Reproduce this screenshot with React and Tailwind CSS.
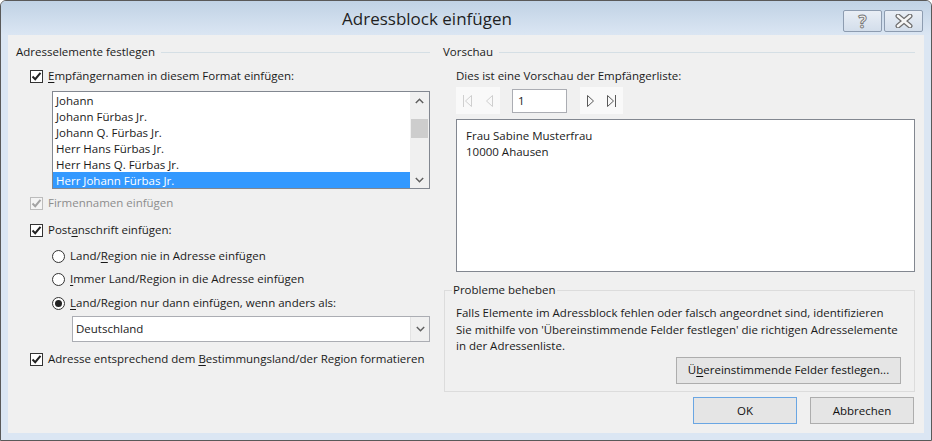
import React from 'react';

const font = { fontFamily: '"Open Sans", "Noto Sans", sans-serif' };

function CheckBox({ checked = true, disabled = false }) {
  const stroke = disabled ? '#a3a3a3' : '#222';
  return (
    <span className={`w-[13px] h-[13px] shrink-0 border flex items-center justify-center ${disabled ? 'border-[#bcbcbc] bg-[#f4f4f4]' : 'border-[#333] bg-white'}`}>
      {checked && (
        <svg width="11" height="11" viewBox="0 0 11 11">
          <path d="M1.5 5.5 L4.2 8.2 L9.5 1.8" fill="none" stroke={stroke} strokeWidth="2" />
        </svg>
      )}
    </span>
  );
}

function Radio({ checked = false }) {
  return (
    <span className="w-[13px] h-[13px] shrink-0 rounded-full border border-[#333] bg-white flex items-center justify-center">
      {checked && <span className="w-[7px] h-[7px] rounded-full bg-[#222]" />}
    </span>
  );
}

function Chevron({ up = false }) {
  return (
    <svg width="9" height="6" viewBox="0 0 9 6">
      <path d={up ? 'M0.8 5 L4.5 1.3 L8.2 5' : 'M0.8 1 L4.5 4.7 L8.2 1'} fill="none" stroke="#606060" strokeWidth="1.5" />
    </svg>
  );
}

function NavIcon({ dir, bar, color }) {
  const tri = dir === 'left' ? 'M8.5 0.5 L8.5 11.5 L2.5 6 Z' : 'M1.5 0.5 L1.5 11.5 L7.5 6 Z';
  return (
    <svg width="10" height="12" viewBox="0 0 10 12">
      <path d={tri} fill="none" stroke={color} strokeWidth="1" />
      {bar && <path d={dir === 'left' ? 'M0.5 0 L0.5 12' : 'M9.5 0 L9.5 12'} stroke={color} strokeWidth="1" />}
    </svg>
  );
}

function U({ children }) {
  return <span className="underline underline-offset-2">{children}</span>;
}

function GroupHeader({ title }) {
  return (
    <div className="flex items-center h-4">
      <span className="leading-4">{title}</span>
      <span className="flex-1 h-px bg-[#d5dfe5] ml-[6px] mt-px" />
    </div>
  );
}

function Btn({ children, className = '' }) {
  return (
    <button className={`h-[27px] border bg-[#e5e5e5] text-[11.5px] text-[#111] flex items-center justify-center whitespace-nowrap ${className}`}>
      {children}
    </button>
  );
}

const names = [
  'Johann',
  'Johann Fürbas Jr.',
  'Johann Q. Fürbas Jr.',
  'Herr Hans Fürbas Jr.',
  'Herr Hans Q. Fürbas Jr.',
  'Herr Johann Fürbas Jr.',
];

export default function App() {
  return (
    <div style={font} className="w-[932px] h-[441px] bg-[#dbe6f3] border border-[#595959] rounded-t-[6px] flex flex-col text-[11.5px] text-[#1a1a1a] overflow-hidden whitespace-nowrap">
      {/* title bar */}
      <div className="h-[34px] flex bg-gradient-to-b from-[#c0d2e5] to-[#dbe6f3]">
        <div className="flex-1 flex items-center justify-center pt-px">
          <span className="text-[17px] text-[#1f1f1f] ml-[10px]">Adressblock einfügen</span>
        </div>
        <div className="flex gap-[2px] pt-[9px] pr-[8px]">
          <div className="w-[39px] h-[22px] border border-[#8d9cb0] rounded-[2px] bg-gradient-to-b from-[#e9eef5] to-[#d3deeb] flex items-center justify-center">
            <span className="text-[17px] font-bold leading-none text-[#f4f4f4] [-webkit-text-stroke:1px_#7b7b7b]">?</span>
          </div>
          <div className="w-[39px] h-[22px] border border-[#8d9cb0] rounded-[2px] bg-gradient-to-b from-[#e9eef5] to-[#d3deeb] flex items-center justify-center">
            <svg width="18" height="14" viewBox="0 0 18 14">
              <path d="M3 2 L15 12 M15 2 L3 12" stroke="#6f6f6f" strokeWidth="5" strokeLinecap="round" />
              <path d="M3 2 L15 12 M15 2 L3 12" stroke="#f6f6f6" strokeWidth="2.6" strokeLinecap="round" />
            </svg>
          </div>
        </div>
      </div>

      {/* content */}
      <div className="mx-[7px] h-[398px] bg-[#f0f0f0] flex">
        {/* left column */}
        <div className="w-[430px] pl-2 pr-2 pt-[9px] flex flex-col">
          <GroupHeader title="Adresselemente festlegen" />

          <div className="flex items-center h-4 mt-2 ml-[14px] gap-[5px]">
            <CheckBox />
            <span><U>E</U>mpfängernamen in diesem Format einfügen:</span>
          </div>

          <div className="ml-[36px] mt-[7px] h-[98px] border border-[#828790] bg-white flex">
            <div className="flex-1 flex flex-col">
              {names.map((n, i) => (
                <div key={n} className={`h-4 leading-4 pl-[3px] pt-px ${i === 5 ? 'bg-[#3399ff] text-white' : ''}`}>{n}</div>
              ))}
            </div>
            <div className="w-[19px] bg-[#f0f0f0] flex flex-col items-center">
              <div className="h-[17px] flex items-center justify-center"><Chevron up /></div>
              <div className="w-[17px] h-[19px] bg-[#cdcdcd] mt-[10px]" />
              <div className="flex-1" />
              <div className="h-[17px] flex items-center justify-center"><Chevron /></div>
            </div>
          </div>

          <div className="flex items-center h-4 mt-[6px] ml-[14px] gap-[5px] text-[#8d8d8d]">
            <CheckBox disabled />
            <span>Firmennamen einfügen</span>
          </div>

          <div className="flex items-center h-4 mt-[11px] ml-[14px] gap-[5px]">
            <CheckBox />
            <span>Post<U>a</U>nschrift einfügen:</span>
          </div>

          <div className="flex items-center h-4 mt-[10px] ml-[36px] gap-[5px]">
            <Radio />
            <span>Land/<U>R</U>egion nie in Adresse einfügen</span>
          </div>
          <div className="flex items-center h-4 mt-[7px] ml-[36px] gap-[5px]">
            <Radio />
            <span><U>I</U>mmer Land/Region in die Adresse einfügen</span>
          </div>
          <div className="flex items-center h-4 mt-[8px] ml-[36px] gap-[5px]">
            <Radio checked />
            <span><U>L</U>and/Region nur dann einfügen, wenn anders als:</span>
          </div>

          <div className="ml-[56px] mt-[5px] h-[26px] border border-[#abadb3] bg-white flex">
            <div className="flex-1 flex items-center pl-[3px]">Deutschland</div>
            <div className="w-[19px] bg-[#f0f0f0] border-l border-[#e3e3e3] flex items-center justify-center">
              <Chevron />
            </div>
          </div>

          <div className="flex items-center h-4 mt-[9px] ml-[14px] gap-[5px]">
            <CheckBox />
            <span>Adresse entsprechend dem <U>B</U>estimmungsland/der Region formatieren</span>
          </div>
        </div>

        {/* right column */}
        <div className="flex-1 pl-[5px] pr-[9px] pt-[9px] flex flex-col">
          <GroupHeader title="Vorschau" />

          <div className="ml-[13px] flex flex-col">
            <div className="h-4 leading-4 mt-2">Dies ist eine Vorschau der Empfängerliste:</div>

            <div className="flex items-center h-[27px] mt-[3px]">
              <div className="w-[44px] h-[27px] bg-[#f9f9f9] flex items-center pl-[7px] gap-[11px]">
                <NavIcon dir="left" bar color="#cfcfcf" />
                <NavIcon dir="left" color="#cfcfcf" />
              </div>
              <div className="ml-[12px] w-[55px] h-[24px] border border-[#abadb3] bg-white flex items-center pl-[5px]">1</div>
              <div className="ml-[13px] w-[43px] h-[27px] bg-[#f9f9f9] flex items-center pl-[6px] gap-[10px]">
                <NavIcon dir="right" color="#5a5a5a" />
                <NavIcon dir="right" bar color="#5a5a5a" />
              </div>
            </div>

            <div className="mt-[5px] h-[153px] border border-[#828790] bg-white pl-[9px] pt-[8px] leading-4">
              <div>Frau Sabine Musterfrau</div>
              <div>10000 Ahausen</div>
            </div>
          </div>

          <fieldset className="mt-[10px] ml-px h-[110px] border border-[#dcdcdc] px-[11px]">
            <legend className="ml-[-4px] px-px leading-4">Probleme beheben</legend>
            <div className="leading-[16.5px] mt-[7px]">
              <div>Falls Elemente im Adressblock fehlen oder falsch angeordnet sind, identifizieren</div>
              <div>Sie mithilfe von 'Übereinstimmende Felder festlegen' die richtigen Adresselemente</div>
              <div>in der Adressenliste.</div>
            </div>
            <div className="flex justify-end mt-[2px] pr-[2px]">
              <Btn className="w-[225px] border-[#adadad]">Ü<U>b</U>ereinstimmende Felder festlegen...</Btn>
            </div>
          </fieldset>

          <div className="flex justify-end gap-[13px] mt-[5px] pr-px">
            <Btn className="w-[104px] border-[#6aa6e3]">OK</Btn>
            <Btn className="w-[104px] border-[#adadad]">Abbrechen</Btn>
          </div>
        </div>
      </div>
    </div>
  );
}
